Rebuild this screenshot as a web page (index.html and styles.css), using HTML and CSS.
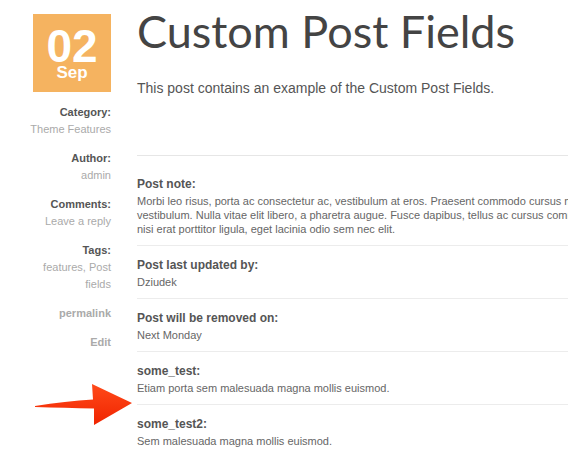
FILE: index.html
```html
<!DOCTYPE html>
<html lang="en">
<head>
    <meta charset="UTF-8">
    <meta name="viewport" content="width=device-width, initial-scale=1.0">
    <title>Custom Post Fields</title>
    <link rel="stylesheet" href="styles.css">
</head>
<body>
    <div class="post">
        <aside class="post-meta">
            <div class="date">
                <span class="day">02</span>
                <span class="month">Sep</span>
            </div>

            <dl class="meta-list">
                <dt>Category:</dt>
                <dd><a href="#">Theme Features</a></dd>

                <dt>Author:</dt>
                <dd><a href="#">admin</a></dd>

                <dt>Comments:</dt>
                <dd><a href="#">Leave a reply</a></dd>

                <dt>Tags:</dt>
                <dd><a href="#">features</a>, <a href="#">Post fields</a></dd>
            </dl>

            <a class="meta-link" href="#">permalink</a>
            <a class="meta-link" href="#">Edit</a>
        </aside>

        <article class="post-body">
            <header class="post-header">
                <h1>Custom Post Fields</h1>
                <p class="intro">This post contains an example of the Custom Post Fields.</p>
            </header>

            <!-- pola dodatkowe wpisu -->
            <div class="fields">
                <div class="field">
                    <h3>Post note:</h3>
                    <p>Morbi leo risus, porta ac consectetur ac, vestibulum at eros. Praesent commodo cursus magna, vel scelerisque nisl consectetur et. Cras mattis<br>
                    vestibulum. Nulla vitae elit libero, a pharetra augue. Fusce dapibus, tellus ac cursus commodo, tortor mauris condimentum nibh, ut fermentum<br>
                    nisi erat porttitor ligula, eget lacinia odio sem nec elit.</p>
                </div>
                <div class="field">
                    <h3>Post last updated by:</h3>
                    <p>Dziudek</p>
                </div>
                <div class="field">
                    <h3>Post will be removed on:</h3>
                    <p>Next Monday</p>
                </div>
                <div class="field">
                    <h3>some_test:</h3>
                    <p>Etiam porta sem malesuada magna mollis euismod.</p>
                </div>
                <div class="field">
                    <h3>some_test2:</h3>
                    <p>Sem malesuada magna mollis euismod.</p>
                </div>
            </div>
        </article>

        <svg class="arrow" width="110" height="50" viewBox="0 0 110 50">
            <defs>
                <linearGradient id="arrowFill" x1="0" y1="0" x2="0" y2="1">
                    <stop offset="0" stop-color="#ff4a1a"/>
                    <stop offset="1" stop-color="#f02400"/>
                </linearGradient>
            </defs>
            <path d="M5 26 C 25 23, 45 20.5, 63 19.5 L 62 4 L 102 23 L 64 45 L 64 28.5 C 45 28, 25 27.5, 5 27 Z" fill="url(#arrowFill)"/>
        </svg>
    </div>
</body>
</html>
```

FILE: styles.css
```css
body {
    margin: 0;
    padding: 0;
    background: #fff;
    font-family: "Liberation Sans", Arial, sans-serif;
    color: #555;
    overflow: hidden;
}
a {
    color: inherit;
    text-decoration: none;
}
.post {
    position: relative;
    display: flex;
    gap: 26px;
    padding: 14px 0 0 21px;
    width: 700px;
}

/* lewa kolumna */
.post-meta {
    flex: 0 0 90px;
    display: flex;
    flex-direction: column;
    align-items: flex-end;
    text-align: right;
    font-size: 11px;
    line-height: 17px;
}
.date {
    width: 78px;
    height: 78px;
    box-sizing: border-box;
    padding-top: 13px;
    background: #f5b360;
    color: #fff;
    font-weight: bold;
    text-align: center;
}
.date .day {
    display: block;
    font-size: 46px;
    line-height: 39px;
}
.date .month {
    display: block;
    font-size: 17px;
    line-height: 13px;
}
.meta-list {
    margin: 12px 0 0;
}
.meta-list dt {
    font-weight: bold;
    color: #555;
}
.meta-list dd {
    margin: 0 0 12px;
    color: #aaa;
}
.meta-link {
    font-weight: bold;
    color: #aaa;
    margin-bottom: 12px;
}

/* tresc wpisu */
.post-body {
    flex: 1;
}
.post-header {
    height: 141px;
    border-bottom: 1px solid #e6e6e6;
}
.post-header h1 {
    margin: 0;
    font-family: Lato, "Open Sans", sans-serif;
    font-weight: normal;
    font-size: 45px;
    line-height: 34px;
    color: #444;
}
.intro {
    margin: 31px 0 0;
    font-size: 14px;
    line-height: 18px;
}
.fields {
    margin-top: 9px;
}
.field {
    padding: 11px 0 9px;
    border-bottom: 1px solid #ececec;
}
.field:last-child {
    border-bottom: none;
}
.field h3 {
    margin: 0 0 2px;
    font-size: 12px;
    line-height: 16px;
    color: #555;
}
.field p {
    margin: 0;
    font-size: 11px;
    line-height: 14px;
    color: #666;
    white-space: nowrap;
}

.arrow {
    position: absolute;
    left: 30px;
    top: 380px;
}
```
